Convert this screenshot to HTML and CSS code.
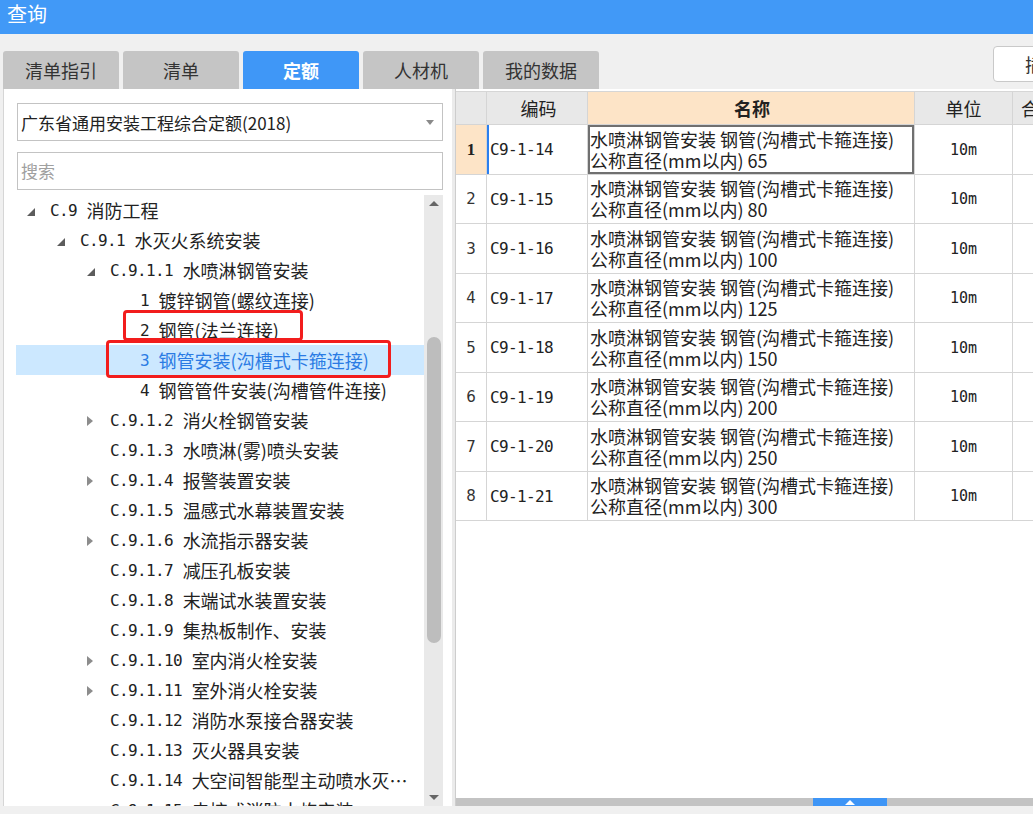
FILE: index.html
```html
<!DOCTYPE html>
<html lang="zh-CN">
<head>
<meta charset="utf-8">
<title>查询</title>
<link rel="stylesheet" href="styles.css">
</head>
<body>
<div class="app">
  <header class="titlebar">查询</header>
  <div class="toolbar">
    <nav class="tabs">
      <div class="tab">清单指引</div>
      <div class="tab">清单</div>
      <div class="tab active">定额</div>
      <div class="tab">人材机</div>
      <div class="tab">我的数据</div>
    </nav>
    <button class="insert-btn">插入</button>
  </div>
  <div class="main">
    <aside class="left">
      <div class="select"><span>广东省通用安装工程综合定额(2018)</span><i class="caret"></i></div>
      <div class="search">搜索</div>
      <div class="tree">
        <div class="rows">
          <div class="r l0"><i class="tw open"></i><span class="code">C.9</span><span>消防工程</span></div>
          <div class="r l1"><i class="tw open"></i><span class="code">C.9.1</span><span>水灭火系统安装</span></div>
          <div class="r l2"><i class="tw open"></i><span class="code">C.9.1.1</span><span>水喷淋钢管安装</span></div>
          <div class="r l3"><i class="tw"></i><span class="code">1</span><span>镀锌钢管(螺纹连接)</span></div>
          <div class="r l3"><i class="tw"></i><span class="code">2</span><span>钢管(法兰连接)</span></div>
          <div class="r l3 sel"><i class="tw"></i><span class="code">3</span><span>钢管安装(沟槽式卡箍连接)</span></div>
          <div class="r l3"><i class="tw"></i><span class="code">4</span><span>钢管管件安装(沟槽管件连接)</span></div>
          <div class="r l2"><i class="tw closed"></i><span class="code">C.9.1.2</span><span>消火栓钢管安装</span></div>
          <div class="r l2"><i class="tw"></i><span class="code">C.9.1.3</span><span>水喷淋(雾)喷头安装</span></div>
          <div class="r l2"><i class="tw closed"></i><span class="code">C.9.1.4</span><span>报警装置安装</span></div>
          <div class="r l2"><i class="tw"></i><span class="code">C.9.1.5</span><span>温感式水幕装置安装</span></div>
          <div class="r l2"><i class="tw closed"></i><span class="code">C.9.1.6</span><span>水流指示器安装</span></div>
          <div class="r l2"><i class="tw"></i><span class="code">C.9.1.7</span><span>减压孔板安装</span></div>
          <div class="r l2"><i class="tw"></i><span class="code">C.9.1.8</span><span>末端试水装置安装</span></div>
          <div class="r l2"><i class="tw"></i><span class="code">C.9.1.9</span><span>集热板制作、安装</span></div>
          <div class="r l2"><i class="tw closed"></i><span class="code">C.9.1.10</span><span>室内消火栓安装</span></div>
          <div class="r l2"><i class="tw closed"></i><span class="code">C.9.1.11</span><span>室外消火栓安装</span></div>
          <div class="r l2"><i class="tw"></i><span class="code">C.9.1.12</span><span>消防水泵接合器安装</span></div>
          <div class="r l2"><i class="tw"></i><span class="code">C.9.1.13</span><span>灭火器具安装</span></div>
          <div class="r l2"><i class="tw"></i><span class="code">C.9.1.14</span><span>大空间智能型主动喷水灭…</span></div>
          <div class="r l2"><i class="tw"></i><span class="code">C.9.1.15</span><span>电控式消防水炮安装</span></div>
        </div>
        <div class="vscroll"><i class="up"></i><div class="thumb"></div><i class="down"></i></div>
        <div class="mark mark1"></div>
        <div class="mark mark2"></div>
      </div>
    </aside>
    <div class="splitter"></div>
    <section class="right">
      <div class="grid">
        <div class="gr hdr">
          <div class="c num"></div>
          <div class="c code-c center">编码</div>
          <div class="c name center active-col">名称</div>
          <div class="c unit center">单位</div>
          <div class="c more">合价</div>
        </div>
        <div class="gr first">
          <div class="c num cur">1</div>
          <div class="c code-c focus">C9-1-14</div>
          <div class="c name selected">水喷淋钢管安装 钢管(沟槽式卡箍连接)<br>公称直径(mm以内) 65</div>
          <div class="c unit center mono">10m</div>
          <div class="c more"></div>
        </div>
        <div class="gr">
          <div class="c num">2</div>
          <div class="c code-c">C9-1-15</div>
          <div class="c name">水喷淋钢管安装 钢管(沟槽式卡箍连接)<br>公称直径(mm以内) 80</div>
          <div class="c unit center mono">10m</div>
          <div class="c more"></div>
        </div>
        <div class="gr">
          <div class="c num">3</div>
          <div class="c code-c">C9-1-16</div>
          <div class="c name">水喷淋钢管安装 钢管(沟槽式卡箍连接)<br>公称直径(mm以内) 100</div>
          <div class="c unit center mono">10m</div>
          <div class="c more"></div>
        </div>
        <div class="gr">
          <div class="c num">4</div>
          <div class="c code-c">C9-1-17</div>
          <div class="c name">水喷淋钢管安装 钢管(沟槽式卡箍连接)<br>公称直径(mm以内) 125</div>
          <div class="c unit center mono">10m</div>
          <div class="c more"></div>
        </div>
        <div class="gr">
          <div class="c num">5</div>
          <div class="c code-c">C9-1-18</div>
          <div class="c name">水喷淋钢管安装 钢管(沟槽式卡箍连接)<br>公称直径(mm以内) 150</div>
          <div class="c unit center mono">10m</div>
          <div class="c more"></div>
        </div>
        <div class="gr">
          <div class="c num">6</div>
          <div class="c code-c">C9-1-19</div>
          <div class="c name">水喷淋钢管安装 钢管(沟槽式卡箍连接)<br>公称直径(mm以内) 200</div>
          <div class="c unit center mono">10m</div>
          <div class="c more"></div>
        </div>
        <div class="gr">
          <div class="c num">7</div>
          <div class="c code-c">C9-1-20</div>
          <div class="c name">水喷淋钢管安装 钢管(沟槽式卡箍连接)<br>公称直径(mm以内) 250</div>
          <div class="c unit center mono">10m</div>
          <div class="c more"></div>
        </div>
        <div class="gr">
          <div class="c num">8</div>
          <div class="c code-c">C9-1-21</div>
          <div class="c name">水喷淋钢管安装 钢管(沟槽式卡箍连接)<br>公称直径(mm以内) 300</div>
          <div class="c unit center mono">10m</div>
          <div class="c more"></div>
        </div>
      </div>
      <div class="hscroll"><div class="hthumb"><i></i></div></div>
    </section>
  </div>
</div>
</body>
</html>
```

FILE: styles.css
```css
* { box-sizing: border-box; }
html, body { margin: 0; padding: 0; }
body {
  width: 1033px;
  height: 814px;
  overflow: hidden;
  background: #f0f0f0;
  font-family: "Noto Sans CJK SC", "Noto Sans", sans-serif;
  color: #222;
}
.app { width: 1033px; height: 814px; display: flex; flex-direction: column; }

.titlebar {
  height: 34px;
  flex: none;
  background: #4199f7;
  color: #fff;
  font-size: 20px;
  line-height: 28px;
  padding-left: 7px;
}

.toolbar { height: 55px; flex: none; display: flex; align-items: flex-start; }
.tabs { display: flex; gap: 4px; padding: 17px 0 0 3px; }
.tab {
  width: 116px;
  height: 38px;
  background: #c5c5c5;
  border-radius: 3px 3px 0 0;
  font-size: 18px;
  line-height: 38px;
  text-align: center;
  color: #333;
}
.tab.active { background: #3f97f7; color: #fff; font-weight: bold; }
.insert-btn {
  margin: 12px -60px 0 auto;
  width: 100px;
  height: 36px;
  background: #fff;
  border: 1px solid #c9c9c9;
  border-radius: 4px;
  font: 18px "Noto Sans CJK SC", sans-serif;
  color: #333;
  text-align: left;
  padding: 0 0 0 31px;
}

.main { height: 717px; flex: none; display: flex; padding-left: 3px; }

.left {
  width: 449px;
  flex: none;
  background: #fff;
  border-left: 1px solid #d6d6d6;
  padding: 14px 9px 0 13px;
  display: flex;
  flex-direction: column;
}
.select {
  height: 38px;
  flex: none;
  border: 1px solid #c3c3c3;
  display: flex;
  align-items: center;
  padding: 0 8px 0 3px;
  font-size: 17px;
  color: #222;
}
.select span { flex: 1; }
.caret {
  border-top: 5px solid #8a8a8a;
  border-left: 4px solid transparent;
  border-right: 4px solid transparent;
}
.search {
  height: 38px;
  flex: none;
  margin-top: 11px;
  border: 1px solid #c3c3c3;
  padding-left: 3px;
  font-size: 17px;
  line-height: 36px;
  color: #a0a0a0;
}

.tree {
  position: relative;
  flex: 1;
  min-height: 0;
  margin: 5px 0 0 -1px;
  display: flex;
  overflow: hidden;
}
.rows { flex: 1; }
.r {
  height: 30px;
  display: flex;
  align-items: center;
  white-space: nowrap;
  font-size: 18px;
  color: #222;
}
.r.l0 { padding-left: 11px; }
.r.l1 { padding-left: 41px; }
.r.l2 { padding-left: 71px; }
.r.l3 { padding-left: 101px; }
.r.sel { background: #cce8ff; color: #2a7be4; }
.tw { width: 23px; height: 30px; flex: none; display: flex; align-items: center; }
.tw.open::before {
  content: "";
  margin-top: 4px;
  border-left: 8px solid transparent;
  border-bottom: 8px solid #5c5c5c;
}
.tw.closed::before {
  content: "";
  margin-top: 2px;
  border-left: 6px solid #8c8c8c;
  border-top: 5px solid transparent;
  border-bottom: 5px solid transparent;
}
.code {
  font-family: "DejaVu Sans Mono", monospace;
  font-size: 16px;
  letter-spacing: -0.63px;
  margin-right: 9.6px;
}

.vscroll {
  width: 19px;
  flex: none;
  background: #e9e9e9;
  display: flex;
  flex-direction: column;
  align-items: center;
}
.vscroll .up {
  margin-top: 6px;
  border-bottom: 5px solid #666;
  border-left: 5px solid transparent;
  border-right: 5px solid transparent;
}
.vscroll .thumb {
  margin-top: 131px;
  width: 14px;
  height: 306px;
  border-radius: 7px;
  background: #bdbdbd;
}
.vscroll .down {
  margin-top: auto;
  margin-bottom: 6px;
  border-top: 5px solid #666;
  border-left: 5px solid transparent;
  border-right: 5px solid transparent;
}

.mark {
  position: absolute;
  border: 3px solid #f21d1d;
  border-radius: 4px;
}
.mark1 { left: 107px; top: 115px; width: 180px; height: 31px; }
.mark2 { left: 90px; top: 145px; width: 285px; height: 38px; }

.splitter { width: 3px; flex: none; background: #ebebeb; }

.right {
  flex: 1;
  min-width: 0;
  background: #fff;
  border-left: 1px solid #cdcdcd;
  display: flex;
  flex-direction: column;
  overflow: hidden;
  padding-top: 2px;
}
.grid { border-top: 1px solid #d6d6d6; width: 700px; }
.gr { display: flex; height: 49px; }
.gr:nth-child(even) { height: 50px; }
.gr.hdr { height: 33px; }
.c {
  flex: none;
  border-right: 1px solid #d5d5d5;
  border-bottom: 1px solid #d5d5d5;
  display: flex;
  align-items: center;
  font-size: 18px;
  color: #222;
  white-space: nowrap;
}
.c.num { width: 31px; justify-content: center; font-family: "DejaVu Sans", sans-serif; font-size: 15px; color: #333; }
.c.code-c { width: 101px; padding-left: 3px; font-family: "DejaVu Sans Mono", monospace; font-size: 16px; letter-spacing: -0.63px; }
.c.name { width: 327px; padding-left: 2px; line-height: 21px; }
.c.unit { width: 98px; }
.c.more { width: 120px; padding-left: 8px; }
.c.center { justify-content: center; }
.c.mono { font-family: "DejaVu Sans Mono", monospace; font-size: 15px; }

.hdr .c { background: #e8e8e8; font-family: "Noto Sans CJK SC", sans-serif; font-size: 18px; letter-spacing: 0; }
.hdr .c.active-col { background: #fde4c7; font-weight: bold; }

.c.num.cur { background: #fde4c7; font-family: "Liberation Serif", serif; font-weight: bold; font-size: 17px; color: #222; }
.c.focus { box-shadow: inset 2px 0 0 #2b7fef; }
.c.selected { box-shadow: inset 0 0 0 2px #707070; }

.hscroll {
  margin-top: auto;
  height: 8px;
  flex: none;
  background: #c3c3c3;
  display: flex;
}
.hthumb {
  margin-left: 357px;
  width: 74px;
  height: 8px;
  background: #3e95f6;
  display: flex;
  align-items: center;
  justify-content: center;
}
.hthumb i {
  border-bottom: 5px solid #fff;
  border-left: 5px solid transparent;
  border-right: 5px solid transparent;
}
```
